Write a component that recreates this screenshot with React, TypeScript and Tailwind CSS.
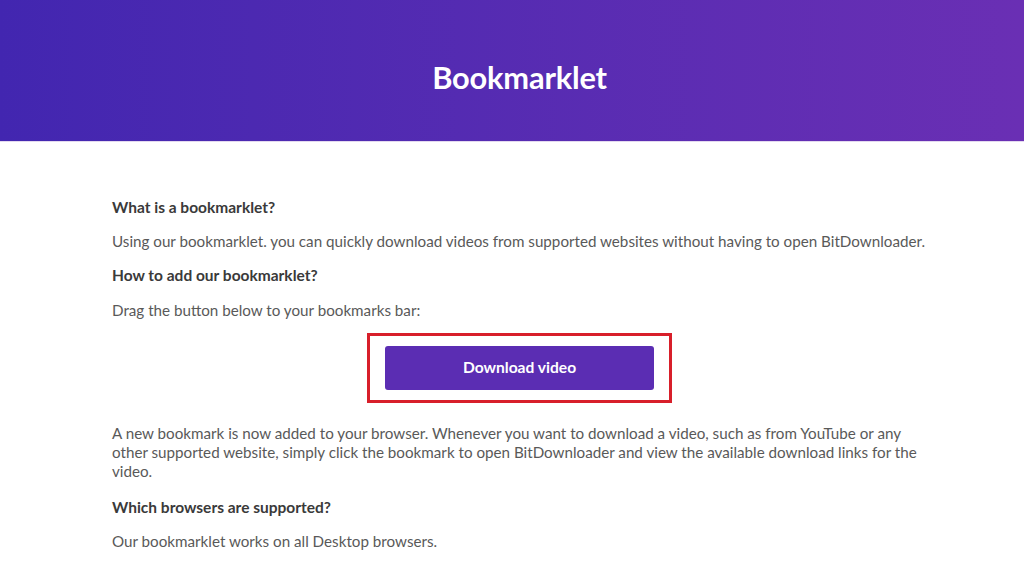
// region component
export default function App() {
  return (
    <div className="min-h-[576px] w-full bg-white font-['Lato',sans-serif]">
      {/* Cabecera */}
      <header className="flex h-[141px] items-center justify-center bg-gradient-to-r from-[#4226b0] to-[#6a2fb4]">
        <h1 className="pl-[15px] pt-[16px] text-[30.8px] font-bold tracking-[-0.2px] text-white">Bookmarklet</h1>
      </header>
      <div className="h-[1px] bg-[#e3d9ef]" />

      {/* Contenido */}
      <main className="ml-[112px] w-[815px] pt-[55px] text-[15.2px] text-[#595959]">
        <h2 className="text-[15.5px] font-bold leading-[20px] text-[#3a3a3a]">What is a bookmarklet?</h2>
        <p className="mt-[14px] leading-[20px]">
          Using our bookmarklet. you can quickly download videos from supported websites without having to open BitDownloader.
        </p>
        <h2 className="mt-[14px] text-[15.5px] font-bold leading-[20px] text-[#3a3a3a]">How to add our bookmarklet?</h2>
        <p className="mt-[15px] leading-[20px]">Drag the button below to your bookmarks bar:</p>

        <div className="mt-[13px] flex justify-center">
          <div className="border-[3px] border-[#d81f2a] px-[15px] py-[10px]">
            <button className="flex h-[44px] w-[269px] items-center justify-center rounded-[3px] bg-[#5b2db3] text-[15.6px] font-bold text-white">
              Download video
            </button>
          </div>
        </div>

        <p className="mt-[21px] leading-[19px]">
          A new bookmark is now added to your browser. Whenever you want to download a video, such as from YouTube or any
          other supported website, simply click the bookmark to open BitDownloader and view the available download links for the
          video.
        </p>
        <h2 className="mt-[16px] text-[15.5px] font-bold leading-[20px] text-[#3a3a3a]">Which browsers are supported?</h2>
        <p className="mt-[14px] leading-[20px]">Our bookmarklet works on all Desktop browsers.</p>
      </main>
    </div>
  );
}
// endregion
